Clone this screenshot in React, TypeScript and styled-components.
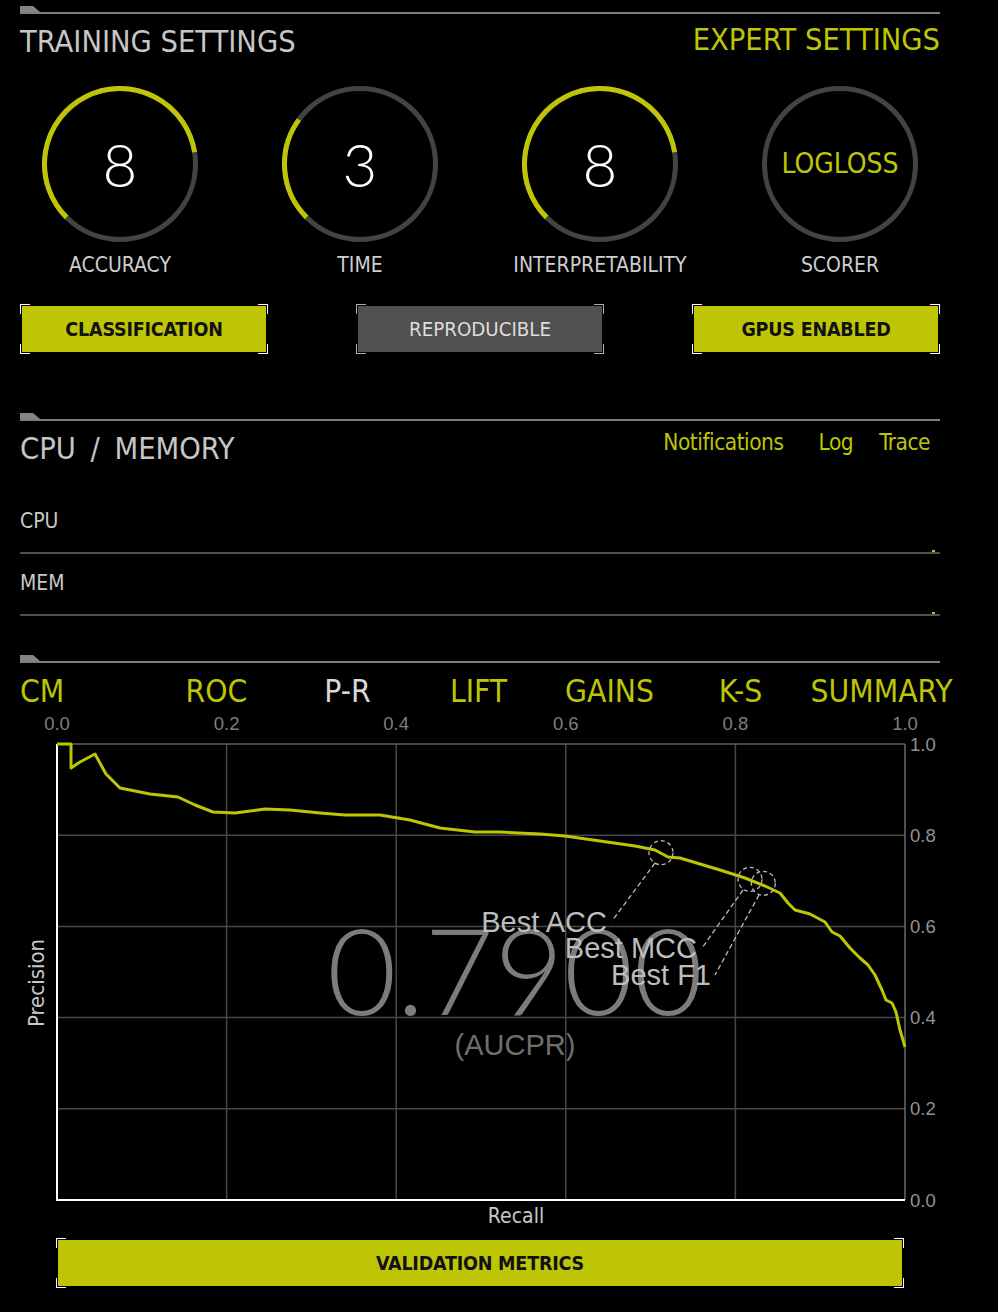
import React from "react";
import styled, { createGlobalStyle } from "styled-components";

const YELLOW = "#bdc505";
const NARROW = `"Liberation Sans Narrow", "DejaVu Sans Condensed", "Liberation Sans", sans-serif`;
const SANS = `"Liberation Sans", Arial, sans-serif`;
const LIGHT = `Lato, "Liberation Sans", sans-serif`;

const GlobalStyle = createGlobalStyle`
  html, body { margin: 0; padding: 0; background: #000; }
  body { font-family: ${NARROW}; color: #c8c8c8; }
  * { box-sizing: border-box; }
`;

const Page = styled.div`
  width: 998px;
  min-height: 1312px;
  padding-top: 6px;
  display: flex;
  flex-direction: column;
  background: #000;
  overflow: hidden;
`;

const Section = styled.section<{ $mt: number }>`
  margin-top: ${(p) => p.$mt}px;
  padding: 0 58px 0 20px;
  display: flex;
  flex-direction: column;
`;

const Divider = styled.div`
  display: flex;
  flex-direction: column;
`;

const DividerTab = styled.div`
  width: 20px;
  height: 6px;
  background: #858585;
  clip-path: polygon(0 0, 13px 0, 20px 100%, 0 100%);
`;

const DividerRule = styled.div`
  height: 2px;
  background: #7d7d7d;
`;

const HeaderRow = styled.div`
  margin-top: 11px;
  height: 33px;
  display: flex;
  justify-content: space-between;
  align-items: flex-start;
`;

const Title = styled.h2<{ $wordGap?: number }>`
  margin: 0;
  font-family: ${NARROW};
  font-weight: normal;
  font-size: 30.5px;
  line-height: 33px;
  word-spacing: ${(p) => p.$wordGap ?? 0}px;
  color: #c6c6c6;
`;

const ExpertLink = styled.a`
  margin-top: -2px;
  font-size: 30.5px;
  line-height: 33px;
  color: ${YELLOW};
  text-decoration: none;
  cursor: pointer;
`;

const DialRow = styled.div`
  margin: 26px 0 0 -20px;
  display: grid;
  grid-template-columns: repeat(4, 240px);
`;

const Dial = styled.div`
  display: flex;
  flex-direction: column;
  align-items: center;
`;

const DialFace = styled.div`
  width: 160px;
  height: 160px;
  display: grid;
  place-items: center;
  & > * {
    grid-area: 1 / 1;
  }
`;

const DialValue = styled.span<{ $word?: boolean }>`
  font-family: ${(p) => (p.$word ? NARROW : LIGHT)};
  font-weight: ${(p) => (p.$word ? 400 : 300)};
  font-size: ${(p) => (p.$word ? 28 : 60)}px;
  line-height: 1;
  color: ${(p) => (p.$word ? YELLOW : "#ffffff")};
`;

const DialLabel = styled.div`
  margin-top: 10px;
  font-size: 21px;
  line-height: 23px;
  color: #cecece;
`;

const ButtonRow = styled.div`
  margin-top: 27px;
  display: flex;
  justify-content: space-between;
`;

const corner = (c: string) => `
  background-image:
    linear-gradient(${c}, ${c}), linear-gradient(${c}, ${c}),
    linear-gradient(${c}, ${c}), linear-gradient(${c}, ${c}),
    linear-gradient(${c}, ${c}), linear-gradient(${c}, ${c}),
    linear-gradient(${c}, ${c}), linear-gradient(${c}, ${c});
  background-size: 10px 1px, 1px 10px, 10px 1px, 1px 10px, 10px 1px, 1px 10px, 10px 1px, 1px 10px;
  background-position: left top, left top, right top, right top, left bottom, left bottom, right bottom, right bottom;
  background-repeat: no-repeat;
`;

const Bracketed = styled.div<{ $muted?: boolean; $width: number; $ml?: number }>`
  width: ${(p) => p.$width}px;
  margin-left: ${(p) => p.$ml ?? 0}px;
  padding: 2px;
  ${(p) => corner(p.$muted ? "#b0b0b0" : "#ffffff")}
`;

const ActionButton = styled.button<{ $muted?: boolean }>`
  width: 100%;
  height: 46px;
  border: 0;
  padding: 0;
  display: flex;
  align-items: center;
  justify-content: center;
  font-family: ${NARROW};
  font-size: ${(p) => (p.$muted ? 20.3 : 19.5)}px;
  letter-spacing: ${(p) => (p.$muted ? 0 : -0.2)}px;
  font-weight: ${(p) => (p.$muted ? 400 : 700)};
  color: ${(p) => (p.$muted ? "#dedede" : "#111111")};
  background: ${(p) => (p.$muted ? "#505050" : YELLOW)};
  cursor: pointer;
`;

const Links = styled.nav`
  margin-top: -2px;
  padding-right: 10px;
  display: flex;
  gap: 26px;
`;

const Link = styled.a<{ $extra?: number }>`
  margin-right: ${(p) => p.$extra ?? 0}px;
  font-size: 22.5px;
  letter-spacing: -0.5px;
  line-height: 25px;
  color: ${YELLOW};
  text-decoration: none;
  cursor: pointer;
`;

const Meters = styled.div`
  margin-top: 27px;
  display: flex;
  flex-direction: column;
`;

const MeterRow = styled.div`
  display: flex;
  flex-direction: column;
  padding-top: 18px;
`;

const MeterLabel = styled.div`
  font-size: 21px;
  line-height: 22px;
  color: #c8c8c8;
`;

const Track = styled.div`
  margin-top: 18px;
  height: 4px;
  display: flex;
  justify-content: flex-end;
  border-bottom: 2px solid #505050;
`;

const Marker = styled.div`
  height: 2px;
  margin-right: 5px;
  background: ${YELLOW};
`;

const Tabs = styled.div`
  margin-top: 11px;
  height: 34px;
  display: grid;
  grid-template-columns: repeat(7, 131px);
`;

const Tab = styled.button<{ $active?: boolean; $first?: boolean; $shift?: number }>`
  justify-self: ${(p) => (p.$first ? "start" : "center")};
  margin-left: ${(p) => p.$shift ?? 0}px;
  padding: 0;
  border: 0;
  background: none;
  white-space: nowrap;
  font-family: ${NARROW};
  font-size: 31.5px;
  line-height: 34px;
  color: ${(p) => (p.$active ? "#d8d8d8" : YELLOW)};
  cursor: pointer;
`;

const ChartSvg = styled.svg`
  display: block;
  margin-left: -20px;
`;

const ValidationWrap = styled.div`
  margin-top: 6px;
`;

/* ---------- Dial ---------- */

function arcPath(cx: number, cy: number, r: number, start: number, sweep: number) {
  const pt = (d: number) => {
    const a = (d * Math.PI) / 180;
    return [cx + r * Math.sin(a), cy - r * Math.cos(a)];
  };
  const [x1, y1] = pt(start);
  const [x2, y2] = pt(start + sweep);
  return `M ${x1.toFixed(2)} ${y1.toFixed(2)} A ${r} ${r} 0 ${sweep > 180 ? 1 : 0} 1 ${x2.toFixed(2)} ${y2.toFixed(2)}`;
}

type DialSpec = { label: string; value: string; level?: number };

const dials: DialSpec[] = [
  { label: "ACCURACY", value: "8", level: 8 },
  { label: "TIME", value: "3", level: 3 },
  { label: "INTERPRETABILITY", value: "8", level: 8 },
  { label: "SCORER", value: "LOGLOSS" },
];

function DialGauge({ spec }: { spec: DialSpec }) {
  return (
    <Dial>
      <DialFace>
        <svg width="160" height="160" viewBox="0 0 160 160">
          <circle cx="80" cy="80" r="75.5" fill="none" stroke="#434343" strokeWidth="5" />
          {spec.level !== undefined && (
            <path
              d={arcPath(80, 80, 75.5, 225, (spec.level / 10) * 270)}
              fill="none"
              stroke={YELLOW}
              strokeWidth="5"
            />
          )}
        </svg>
        <DialValue $word={spec.level === undefined}>{spec.value}</DialValue>
      </DialFace>
      <DialLabel>{spec.label}</DialLabel>
    </Dial>
  );
}

/* ---------- Chart ---------- */

const OFF = 708;
const L = 57;
const R = 905;
const T = 744 - OFF;
const B = 1200 - OFF;

const curvePx: [number, number][] = [
  [57, 744], [71, 744], [71, 768], [80, 762], [95, 754], [106, 774], [120, 788], [150, 794],
  [178, 797], [195, 805], [213, 812], [235, 813], [265, 809], [290, 810], [320, 813], [345, 815],
  [380, 815], [410, 820], [440, 828], [475, 832], [500, 832], [540, 834], [565, 836], [600, 841],
  [635, 846], [655, 850], [668, 857], [680, 858], [700, 864], [720, 870], [745, 878], [765, 886],
  [780, 893], [788, 903], [795, 910], [810, 914], [825, 922], [832, 932], [840, 936], [850, 948],
  [860, 958], [868, 965], [875, 975], [882, 990], [886, 1000], [892, 1003], [896, 1012],
  [900, 1030], [903, 1040], [905, 1047],
];

const ticks = [0, 0.2, 0.4, 0.6, 0.8, 1.0];

type Marked = { label: string; cx: number; cy: number; tx: number; ty: number; lx1: number; ly1: number; lx2: number; ly2: number };

const marks: Marked[] = [
  { label: "Best ACC", cx: 661, cy: 852.7, tx: 607, ty: 932, lx1: 655, ly1: 863, lx2: 612, ly2: 921 },
  { label: "Best MCC", cx: 750, cy: 879.3, tx: 697, ty: 958, lx1: 743, ly1: 890, lx2: 702, ly2: 948 },
  { label: "Best F1", cx: 763.3, cy: 883.3, tx: 711, ty: 985, lx1: 759, ly1: 895, lx2: 715, ly2: 975 },
];

function PRChart() {
  const W = R - L;
  const H = B - T;
  const pts = curvePx.map(([x, y]) => `${x},${y - OFF}`).join(" ");
  return (
    <ChartSvg width="998" height="524" viewBox="0 0 998 524">
      <text x="515" y={1015 - OFF} textAnchor="middle" fontFamily={LIGHT} fontWeight={300} fontSize="120" fill="#7c7c7c">
        0.7900
      </text>
      <text x="515" y={1055 - OFF} textAnchor="middle" fontFamily={SANS} fontSize="29" fill="#6e6e6e">
        (AUCPR)
      </text>
      {ticks.slice(1, 5).map((t) => (
        <line key={`v${t}`} x1={L + W * t} x2={L + W * t} y1={T} y2={B} stroke="#474747" strokeWidth="1.5" />
      ))}
      {ticks.slice(1, 5).map((t) => (
        <line key={`h${t}`} x1={L} x2={R} y1={B - H * t} y2={B - H * t} stroke="#474747" strokeWidth="1.5" />
      ))}
      <line x1={L} x2={R} y1={T} y2={T} stroke="#5e5e5e" strokeWidth="1.5" />
      <line x1={R} x2={R} y1={T} y2={B} stroke="#6a6a6a" strokeWidth="1.5" />
      <line x1={L} x2={L} y1={T} y2={B + 1} stroke="#ffffff" strokeWidth="2" />
      <line x1={L - 1} x2={R} y1={B} y2={B} stroke="#ffffff" strokeWidth="2" />
      {ticks.map((t) => (
        <text key={`tx${t}`} x={L + W * t} y={730 - OFF} textAnchor="middle" fontFamily={SANS} fontSize="18.5" fill="#7e7e7e">
          {t.toFixed(1)}
        </text>
      ))}
      {ticks.map((t) => (
        <text key={`ty${t}`} x={910} y={B - H * t + 6.5} fontFamily={SANS} fontSize="18.5" fill="#929292">
          {t.toFixed(1)}
        </text>
      ))}
      <polyline points={pts} fill="none" stroke={YELLOW} strokeWidth="3" strokeLinejoin="round" />
      {marks.map((m) => (
        <g key={m.label}>
          <circle cx={m.cx} cy={m.cy - OFF} r="12" fill="none" stroke="#bbbbbb" strokeWidth="1.3" strokeDasharray="4 3" />
          <line x1={m.lx1} y1={m.ly1 - OFF} x2={m.lx2} y2={m.ly2 - OFF} stroke="#bbbbbb" strokeWidth="1.3" strokeDasharray="5 3" />
          <text x={m.tx} y={m.ty - OFF} textAnchor="end" fontFamily={SANS} fontSize="29" fill="#bdbdbd">
            {m.label}
          </text>
        </g>
      ))}
      <text x="44" y={983 - OFF} textAnchor="middle" transform={`rotate(-90 44 ${983 - OFF})`} fontFamily={NARROW} fontSize="22" fill="#c8c8c8">
        Precision
      </text>
      <text x="516" y={1223 - OFF} textAnchor="middle" fontFamily={NARROW} fontSize="21" fill="#c8c8c8">
        Recall
      </text>
    </ChartSvg>
  );
}

/* ---------- App ---------- */

const meters = [
  { label: "CPU", value: 3 },
  { label: "MEM", value: 3 },
];

const tabs = ["CM", "ROC", "P-R", "LIFT", "GAINS", "K-S", "SUMMARY"];

export default function App() {
  return (
    <>
      <GlobalStyle />
      <Page>
        <Section $mt={0}>
          <Divider>
            <DividerTab />
            <DividerRule />
          </Divider>
          <HeaderRow>
            <Title>TRAINING SETTINGS</Title>
            <ExpertLink>EXPERT SETTINGS</ExpertLink>
          </HeaderRow>
          <DialRow>
            {dials.map((d) => (
              <DialGauge key={d.label} spec={d} />
            ))}
          </DialRow>
          <ButtonRow>
            <Bracketed $width={248}>
              <ActionButton>CLASSIFICATION</ActionButton>
            </Bracketed>
            <Bracketed $width={248} $muted>
              <ActionButton $muted>REPRODUCIBLE</ActionButton>
            </Bracketed>
            <Bracketed $width={248}>
              <ActionButton>GPUS ENABLED</ActionButton>
            </Bracketed>
          </ButtonRow>
        </Section>

        <Section $mt={59}>
          <Divider>
            <DividerTab />
            <DividerRule />
          </Divider>
          <HeaderRow>
            <Title $wordGap={6}>CPU / MEMORY</Title>
            <Links>
              <Link $extra={9}>Notifications</Link>
              <Link>Log</Link>
              <Link>Trace</Link>
            </Links>
          </HeaderRow>
          <Meters>
            {meters.map((m) => (
              <MeterRow key={m.label}>
                <MeterLabel>{m.label}</MeterLabel>
                <Track>
                  <Marker style={{ width: `${m.value}px` }} />
                </Track>
              </MeterRow>
            ))}
          </Meters>
        </Section>

        <Section $mt={39}>
          <Divider>
            <DividerTab />
            <DividerRule />
          </Divider>
          <Tabs>
            {tabs.map((t, i) => (
              <Tab key={t} $active={t === "P-R"} $first={i === 0} $shift={i === tabs.length - 1 ? 20 : 0}>
                {t}
              </Tab>
            ))}
          </Tabs>
          <PRChart />
          <ValidationWrap>
            <Bracketed $width={848} $ml={36}>
              <ActionButton>VALIDATION METRICS</ActionButton>
            </Bracketed>
          </ValidationWrap>
        </Section>
      </Page>
    </>
  );
}
